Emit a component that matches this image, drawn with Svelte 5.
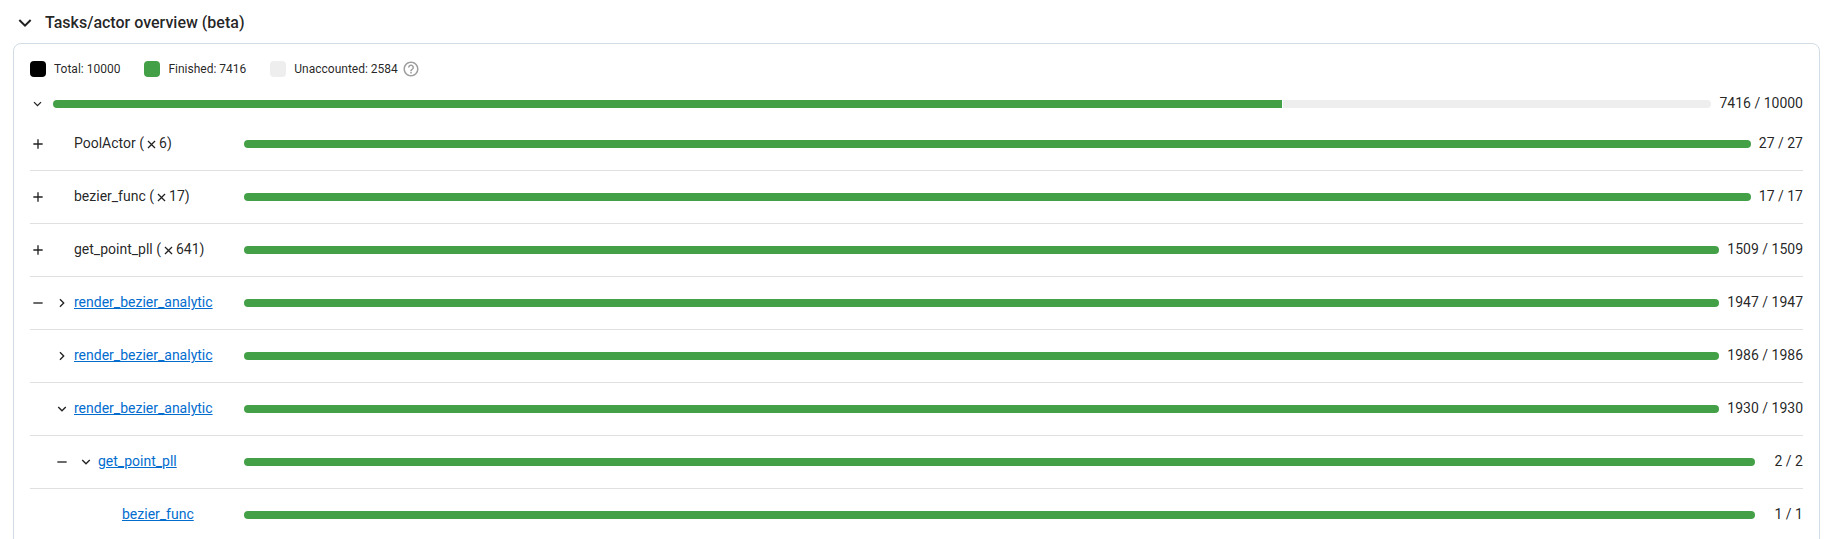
<script>
  const icons = {
    plus: 'M11 11V5h2v6h6v2h-6v6h-2v-6H5v-2z',
    minus: 'M5 11h14v2H5z',
    down: 'M12 13.172l4.95-4.95 1.414 1.414L12 16 5.636 9.636 7.05 8.222z',
    right: 'M13.172 12l-4.95-4.95 1.414-1.414L16 12l-6.364 6.364-1.414-1.414z',
    close: 'M12 10.586l4.95-4.95 1.414 1.414-4.95 4.95 4.95 4.95-1.414 1.414-4.95-4.95-4.95 4.95-1.414-1.414 4.95-4.95-4.95-4.95L7.05 5.636z',
    help: 'M11 18h2v-2h-2v2zm1-16C6.48 2 2 6.48 2 12s4.48 10 10 10 10-4.48 10-10S17.52 2 12 2zm0 18c-4.41 0-8-3.59-8-8s3.59-8 8-8 8 3.59 8 8-3.59 8-8 8zm0-14c-2.21 0-4 1.79-4 4h2c0-1.1.9-2 2-2s2 .9 2 2c0 2-3 1.75-3 5h2c0-2.25 3-2.5 3-5 0-2.21-1.79-4-4-4z'
  };

  const legend = [
    { label: 'Total', value: 10000, color: 'black' },
    { label: 'Finished', value: 7416, color: 'green' },
    { label: 'Unaccounted', value: 2584, color: 'grey', hint: true }
  ];

  const rows = [
    { depth: 0, group: 'plus', name: 'PoolActor', count: 6, done: 27, total: 27 },
    { depth: 0, group: 'plus', name: 'bezier_func', count: 17, done: 17, total: 17 },
    { depth: 0, group: 'plus', name: 'get_point_pll', count: 641, done: 1509, total: 1509 },
    { depth: 0, group: 'minus', toggle: 'right', name: 'render_bezier_analytic', done: 1947, total: 1947 },
    { depth: 0, toggle: 'right', name: 'render_bezier_analytic', done: 1986, total: 1986 },
    { depth: 0, toggle: 'down', name: 'render_bezier_analytic', done: 1930, total: 1930 },
    { depth: 1, group: 'minus', toggle: 'down', name: 'get_point_pll', done: 2, total: 2 },
    { depth: 2, name: 'bezier_func', done: 1, total: 1 }
  ];
</script>

{#snippet icon(name)}
  <svg class="icon" viewBox="0 0 24 24" aria-hidden="true"><path d={icons[name]} /></svg>
{/snippet}

{#snippet progress(done, total)}
  <div class="progress">
    <div class="bar" role="progressbar" aria-label="Finished tasks" aria-valuenow={done} aria-valuemax={total}>
      <span class="green" style:flex-grow={done}></span>
      {#if done < total}<span class="grey" style:flex-grow={total - done}></span>{/if}
    </div>
    <span class="ratio">{done} / {total}</span>
  </div>
{/snippet}

<main>
  <h2>
    <button class="title" aria-expanded="true">{@render icon('down')}Tasks/actor overview (beta)</button>
  </h2>
  <section class="card">
    <ul class="legend">
      {#each legend as item}
        <li>
          <span class="swatch {item.color}"></span>
          {item.label}: {item.value}
          {#if item.hint}<button class="hint" aria-label="Help">{@render icon('help')}</button>{/if}
        </li>
      {/each}
    </ul>
    <div class="overall">
      <button class="toggle" aria-label="Collapse all" aria-expanded="true">{@render icon('down')}</button>
      {@render progress(7416, 10000)}
    </div>
    <ul class="rows">
      {#each rows as row}
        <li>
          <div class="name depth{row.depth}">
            {#if row.group}
              <button class="toggle" aria-label="Toggle group">{@render icon(row.group)}</button>
            {:else}
              <span class="toggle"></span>
            {/if}
            {#if row.toggle}
              <button class="toggle" aria-label="Toggle children" aria-expanded={row.toggle === 'down'}>{@render icon(row.toggle)}</button>
            {:else}
              <span class="toggle"></span>
            {/if}
            {#if row.count}
              <span class="label">{row.name} (<span class="times">{@render icon('close')}</span>{row.count})</span>
            {:else}
              <a class="label" href="#task">{row.name}</a>
            {/if}
          </div>
          {@render progress(row.done, row.total)}
        </li>
      {/each}
    </ul>
  </section>
</main>

<style>
  :global(body) {
    background: #fff;
  }
  main {
    max-height: 100vh;
    overflow: hidden;
    box-sizing: border-box;
    padding: 8px 15px 0 13px;
    font: 14px/20px Roboto, sans-serif;
    color: rgba(0, 0, 0, 0.87);
  }
  h2,
  ul {
    margin: 0;
    padding: 0;
    list-style: none;
  }
  button {
    padding: 0;
    border: 0;
    background: none;
    color: inherit;
    font: inherit;
    cursor: pointer;
  }
  .icon {
    display: block;
    width: 16px;
    height: 16px;
    fill: currentColor;
    flex: none;
  }
  .title {
    display: flex;
    align-items: center;
    gap: 8px;
    font-size: 16px;
    font-weight: 500;
    line-height: 30px;
  }
  .title .icon {
    width: 24px;
    height: 24px;
  }
  .card {
    margin-top: 5px;
    padding: 15px 16px 32px;
    border: 1px solid #d2dce6;
    border-radius: 8px;
  }
  .legend {
    display: flex;
    gap: 24px;
    font-size: 12px;
  }
  .legend li {
    display: flex;
    align-items: center;
  }
  .swatch {
    width: 16px;
    height: 16px;
    margin-right: 8px;
    border-radius: 4px;
  }
  .black {
    background: #000;
  }
  .green {
    background: #43a047;
  }
  .grey {
    background: #eee;
  }
  .hint {
    margin-left: 4px;
    color: #9e9e9e;
  }
  .hint .icon {
    width: 18px;
    height: 18px;
  }
  .overall {
    display: flex;
    align-items: center;
    gap: 8px;
    margin: 14px 0 3px;
  }
  .toggle {
    width: 16px;
    flex: none;
  }
  .overall .toggle,
  .overall .toggle .icon {
    width: 15px;
  }
  .progress {
    display: flex;
    flex: 1;
    align-items: center;
    gap: 8px;
  }
  .bar {
    display: flex;
    flex: 1;
    gap: 1px;
    height: 8px;
    border-radius: 6px;
    overflow: hidden;
  }
  .ratio {
    min-width: 40px;
    padding-bottom: 2px;
    text-align: right;
    white-space: nowrap;
  }
  .rows li {
    display: flex;
    align-items: center;
    height: 52px;
    border-bottom: 1px solid #e0e0e0;
  }
  .name {
    display: flex;
    align-items: center;
    box-sizing: border-box;
    width: 214px;
    flex: none;
  }
  .name .toggle:first-child {
    margin-right: 8px;
  }
  .depth1 {
    padding-left: 24px;
  }
  .depth2 {
    padding-left: 48px;
  }
  .label {
    margin-left: 4px;
    padding-bottom: 2px;
    white-space: nowrap;
  }
  a {
    color: #036dcf;
  }
  .times {
    display: inline-block;
    vertical-align: middle;
  }
  .times .icon {
    width: 15px;
    height: 15px;
  }
</style>
